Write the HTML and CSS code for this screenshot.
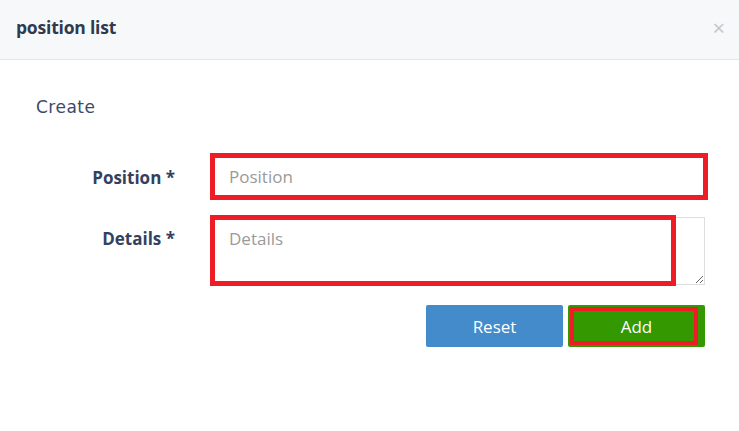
FILE: index.html
```html
<!DOCTYPE html>
<html>
<head>
<meta charset="utf-8">
<link rel="stylesheet" href="styles.css">
</head>
<body>
<div class="modal">
  <div class="modal-header">
    <span class="modal-title">position list</span>
    <span class="close">×</span>
  </div>
  <div class="modal-body">
    <h4 class="section-title">Create</h4>
    <form class="form">
      <div class="row row-input">
        <label class="label">Position *</label>
        <input class="input" type="text" placeholder="Position">
      </div>
      <div class="row row-textarea">
        <label class="label">Details *</label>
        <div class="ta-wrap">
          <textarea class="textarea" placeholder="Details"></textarea>
          <span class="mark mark-ta"></span>
        </div>
      </div>
      <div class="actions">
        <button type="button" class="btn btn-reset">Reset</button>
        <button type="button" class="btn btn-add">Add<span class="mark mark-add"></span></button>
      </div>
    </form>
  </div>
</div>
</body>
</html>
```
FILE: styles.css
```css
* { box-sizing: border-box; }
html, body { margin: 0; padding: 0; background: #fff; }
body { font-family: "Open Sans", "Noto Sans", sans-serif; width: 739px; height: 431px; overflow: hidden; }

.modal-header {
  height: 60px;
  background: #f7f8fa;
  border-bottom: 1px solid #e3e6ea;
  display: flex;
  align-items: center;
  justify-content: space-between;
  padding: 0 14px 0 16px;
}
.modal-title {
  font-size: 17.5px;
  font-weight: 700;
  color: #2f3a4e;
  letter-spacing: -0.2px;
  margin-top: -5px;
}
.close {
  font-size: 22px;
  color: #c4c6c9;
  line-height: 1;
  margin-top: -6px;
}

.modal-body { padding: 35px 31px 0 36px; }
.section-title {
  margin: 0;
  font-family: "DejaVu Sans", sans-serif;
  font-weight: 400;
  font-size: 17px;
  letter-spacing: 0.5px;
  color: #3c4a68;
  line-height: 24px;
}

.form { margin-top: 34px; }
.row { display: flex; align-items: flex-start; }
.label {
  width: 139px;
  text-align: right;
  font-size: 17px;
  font-weight: 700;
  color: #34415e;
  margin-right: 35px;
}
.row-input .label { line-height: 50px; }
.row-input { height: 47px; }
.input {
  width: 498px;
  height: 47px;
  border: 5px solid #ee1c25;
  padding: 0 14px;
  font-family: "Open Sans", sans-serif;
  font-size: 17px;
  color: #555;
  outline: none;
  background: #fff;
}
.input::placeholder, .textarea::placeholder { color: #9a9a9a; }

.row-textarea { margin-top: 15px; }
.row-textarea .label { line-height: 20px; padding-top: 14px; }
.ta-wrap { position: relative; padding-top: 2px; }
.textarea {
  display: block;
  width: 495px;
  height: 68px;
  border: 1px solid #dedede;
  border-radius: 0;
  padding: 11px 18px;
  font-family: "Open Sans", sans-serif;
  font-size: 17px;
  line-height: 20px;
  resize: vertical;
  outline: none;
}
.mark { position: absolute; border: 5px solid #ee1c25; pointer-events: none; }
.mark-ta { left: 0; top: 0; width: 466px; height: 71px; }

.actions {
  display: flex;
  justify-content: flex-end;
  gap: 5px;
  margin-top: 20px;
  width: 669px;
}
.btn {
  height: 42px;
  border: none;
  border-radius: 2px;
  font-family: "Open Sans", sans-serif;
  font-size: 17px;
  color: #fff;
  cursor: pointer;
}
.btn-reset { width: 137px; background: #438bcb; }
.btn-add { position: relative; width: 137px; background: #349900; }
.mark-add { left: 2px; top: 2px; width: 128px; height: 38px; border-width: 4px; }
```
